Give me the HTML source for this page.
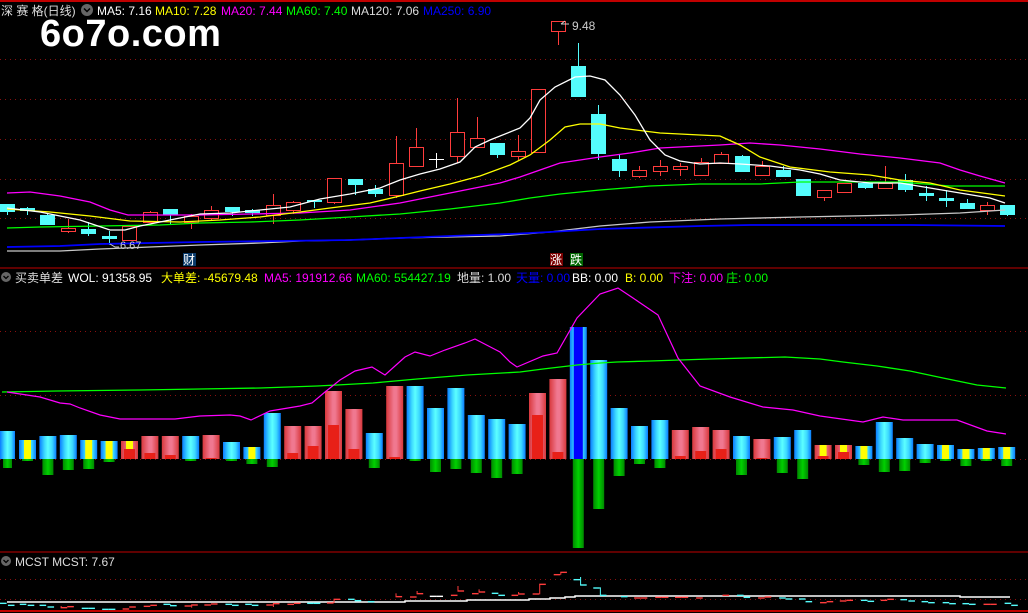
<!DOCTYPE html>
<html><head><meta charset="utf-8"><style>
html,body{margin:0;padding:0;background:#000;width:1028px;height:613px;overflow:hidden}
svg{display:block}
text{font-family:"Liberation Sans","Noto Sans CJK SC",sans-serif;font-size:12px}
</style></head><body>
<svg id="s" width="1028" height="613" xmlns="http://www.w3.org/2000/svg">
<defs>
<linearGradient id="gc" x1="0" x2="1"><stop offset="0" stop-color="#0a7cff"/><stop offset=".3" stop-color="#3cd8ff"/><stop offset=".5" stop-color="#5cffff"/><stop offset=".75" stop-color="#3cd8ff"/><stop offset="1" stop-color="#0a7cff"/></linearGradient>
<linearGradient id="gr" x1="0" x2="1"><stop offset="0" stop-color="#d8383c"/><stop offset=".45" stop-color="#f07890"/><stop offset=".6" stop-color="#f07890"/><stop offset="1" stop-color="#d8383c"/></linearGradient>
<linearGradient id="gg" x1="0" x2="1"><stop offset="0" stop-color="#008800"/><stop offset=".5" stop-color="#00d000"/><stop offset="1" stop-color="#008800"/></linearGradient>
</defs>
<rect width="1028" height="613" fill="#000"/>
<line x1="0" y1="1" x2="1028" y2="1" stroke="#c00000" stroke-width="2"/>
<line x1="0" y1="268" x2="1028" y2="268" stroke="#c00000"/>
<line x1="0" y1="552" x2="1028" y2="552" stroke="#c00000"/>
<line x1="0" y1="611" x2="1028" y2="611" stroke="#c00000" stroke-width="2"/>
<g stroke="#8a1010" stroke-dasharray="1 4">
<line x1="0" y1="59.5" x2="1028" y2="59.5"/><line x1="0" y1="99.5" x2="1028" y2="99.5"/><line x1="0" y1="139.5" x2="1028" y2="139.5"/><line x1="0" y1="179.5" x2="1028" y2="179.5"/><line x1="0" y1="218.5" x2="1028" y2="218.5"/>
<line x1="0" y1="331.5" x2="1028" y2="331.5"/><line x1="0" y1="395.5" x2="1028" y2="395.5"/><line x1="0" y1="459.5" x2="1028" y2="459.5"/>
<line x1="0" y1="579.5" x2="1028" y2="579.5"/><line x1="0" y1="599.5" x2="1028" y2="599.5"/>
</g>
<g id="main"></g>
<g id="vol"></g>
<g id="mc"></g>
<circle cx="87" cy="10" r="6" fill="#666"/><path d="M84 8.5l3 3 3-3" stroke="#000" fill="none" stroke-width="1.5"/>
<text x="1" y="15" fill="#ddd">深 赛 格(日线)</text>
<text x="97" y="15" fill="#fff">MA5: 7.16</text>
<text x="155" y="15" fill="#ffff00">MA10: 7.28</text>
<text x="221" y="15" fill="#ff00ff">MA20: 7.44</text>
<text x="286" y="15" fill="#00ff00">MA60: 7.40</text>
<text x="351" y="15" fill="#ddd">MA120: 7.06</text>
<text x="423" y="15" fill="#0000ff">MA250: 6.90</text>
<text x="40" y="46" fill="#fff" style="font-size:38px;font-weight:bold;letter-spacing:0.5px">6o7o.com</text>
<text x="572" y="30" fill="#ccc">9.48</text>
<path d="M561 24 l4 -3 M561 24h8" stroke="#ccc" fill="none"/>
<text x="120" y="249" fill="#ccc" style="font-size:11px">6.67</text>
<path d="M110 244 l5 3 h4" stroke="#ccc" fill="none"/>
<rect x="183" y="253" width="13" height="13" fill="#0a3a6a"/><text x="183" y="264" fill="#fff" style="font-size:12px">财</text>
<rect x="550" y="253" width="13" height="13" fill="#7a0000"/><text x="550" y="264" fill="#fff" style="font-size:12px">涨</text>
<rect x="570" y="253" width="13" height="13" fill="#006600"/><text x="570" y="264" fill="#fff" style="font-size:12px">跌</text>
<circle cx="6" cy="277" r="5" fill="#666"/><path d="M3.5 276l2.5 2.5 2.5-2.5" stroke="#000" fill="none" stroke-width="1.3"/>
<text x="15" y="282" fill="#ddd">买卖单差</text>
<text x="68" y="282" fill="#fff">WOL: 91358.95</text>
<text x="161" y="282" fill="#ffff00">大单差: -45679.48</text>
<text x="264" y="282" fill="#ff00ff">MA5: 191912.66</text>
<text x="356" y="282" fill="#00ff00">MA60: 554427.19</text>
<text x="457" y="282" fill="#ddd">地量: 1.00</text>
<text x="516" y="282" fill="#0000ff">天量: 0.00</text>
<text x="572" y="282" fill="#fff">BB: 0.00</text>
<text x="625" y="282" fill="#ffff00">B: 0.00</text>
<text x="669" y="282" fill="#ff00ff">下注: 0.00</text>
<text x="726" y="282" fill="#00ff00">庄: 0.00</text>
<circle cx="6" cy="561" r="5" fill="#666"/><path d="M3.5 560l2.5 2.5 2.5-2.5" stroke="#000" fill="none" stroke-width="1.3"/>
<text x="15" y="566" fill="#ddd">MCST  MCST: 7.67</text>
</svg>
<script>
var NS="http://www.w3.org/2000/svg";
function el(p,t,a){var e=document.createElementNS(NS,t);for(var k in a)e.setAttribute(k,a[k]);document.getElementById(p).appendChild(e);return e;}
function line(p,pts,c,w){el(p,"polyline",{points:pts.map(function(q){return q.join(",")}).join(" "),fill:"none",stroke:c,"stroke-width":w||1.3});}
var C=[[7,204,212,204,215,'c'],[27,208,211,207,215,'c'],[47,215,225,214,225,'c'],[68,228,231,219,233,'r'],[88,229,234,222,236,'c'],[109,236,239,231,245,'c'],[129,226,240,225,240,'r'],[150,212,222,211,222,'r'],[170,209,215,209,224,'c'],[191,216,222,214,229,'r'],[211,210,218,206,221,'r'],[232,207,212,207,216,'c'],[252,210,213,209,216,'c'],[273,205,215,194,224,'r'],[293,202,210,201,214,'r'],[314,200,201,200,208,'c'],[334,178,202,178,204,'r'],[355,179,185,179,195,'c'],[375,189,194,185,197,'c'],[396,163,195,136,198,'r'],[416,147,166,128,166,'r'],[436,159,160,153,168,'w'],[457,132,156,98,163,'r'],[477,138,147,117,147,'r'],[497,143,155,143,158,'c'],[518,151,156,135,160,'r'],[538,89,152,89,152,'r'],[558,21,31,21,45,'r'],[578,66,97,43,97,'c'],[598,114,154,105,160,'c'],[619,159,171,155,177,'c'],[639,170,176,166,178,'r'],[660,166,171,160,176,'r'],[680,166,169,163,176,'r'],[701,162,175,158,176,'r'],[721,154,163,152,163,'r'],[742,156,172,155,172,'c'],[762,166,175,161,176,'r'],[783,170,177,166,177,'c'],[803,179,196,179,196,'c'],[824,190,197,190,201,'r'],[844,183,192,183,192,'r'],[865,183,188,183,189,'c'],[885,183,188,166,188,'r'],[905,180,190,174,192,'c'],[926,193,196,186,201,'c'],[946,198,201,190,207,'c'],[967,203,209,199,209,'c'],[987,205,210,202,215,'r'],[1007,205,215,205,216,'c']];
C.forEach(function(k){var x=k[0],col=k[5]=='r'?'#ff3c3c':(k[5]=='c'?'#54fcfc':'#fff');
 el("main","line",{x1:x+.5,x2:x+.5,y1:k[3],y2:k[4],stroke:col});
 if(k[5]=='r')el("main","rect",{x:x-7+.5,y:k[1]+.5,width:14,height:Math.max(k[2]-k[1],1),fill:"#000",stroke:col});
 else if(k[5]=='w')el("main","line",{x1:x-7,x2:x+8,y1:k[1]+.5,y2:k[1]+.5,stroke:col});
 else el("main","rect",{x:x-7,y:k[1],width:15,height:Math.max(k[2]-k[1],2),fill:col});
});
line("main",[[7,251],[60,251],[100,249],[150,247],[200,245],[260,243],[300,241],[350,240],[400,238],[450,237],[500,236],[550,232],[600,226],[650,222],[720,219],[800,217],[900,215],[960,213],[1005,210]],"#c8c8c8");
line("main",[[7,247],[60,246],[100,244],[150,243],[200,242],[280,241],[350,240],[400,238],[450,236],[510,234],[550,232],[600,229],[700,226],[750,225],[850,225],[910,225],[1005,226]],"#0000ff",1.8);
line("main",[[7,228],[40,227],[100,226],[160,225],[200,223],[250,222],[300,220],[350,217],[400,214],[450,209],[500,203],[530,198],[560,194],[600,190],[650,186],[700,184],[760,184],[800,182],[850,182],[900,182],[950,186],[1005,186]],"#00ff00");
line("main",[[7,193],[30,192],[60,196],[90,202],[110,210],[128,215],[170,215],[200,215],[250,214],[300,213],[350,210],[400,203],[430,197],[470,189],[500,183],[520,177],[540,170],[560,163],[580,160],[600,157],[630,153],[660,148],[700,146],[720,145],[750,143],[780,145],[820,149],[860,154],[900,158],[940,163],[960,170],[980,176],[1005,183]],"#ff00ff");
line("main",[[7,209],[50,212],[90,216],[130,221],[180,222],[220,220],[260,217],[300,212],[330,208],[370,203],[400,196],[420,191],[450,184],[480,176],[510,165],[530,155],[550,140],[565,127],[580,124],[600,124],[620,128],[660,133],[700,135],[720,136],[740,145],[760,157],[790,167],[830,172],[870,175],[900,180],[930,183],[960,190],[990,194],[1005,196]],"#ffff00");
line("main",[[7,208],[40,212],[80,220],[110,230],[125,230],[140,226],[170,220],[200,214],[230,213],[260,210],[290,207],[320,199],[350,194],[380,188],[400,180],[420,174],[440,169],[460,162],[475,147],[490,140],[510,132],[520,128],[530,118],[540,100],[555,87],[575,77],[590,76],[605,80],[620,95],[635,115],[650,140],[665,155],[680,161],[700,164],[720,163],[740,164],[770,166],[800,170],[820,174],[840,180],[870,183],[900,183],[930,188],[960,193],[990,198],[1005,203]],"#ffffff");
var V=[[431,'c',468],[440,'y',461],[436,'c',475],[435,'c',470],[440,'y',469],[441,'y',462],[441,'ry',449],[436,'r',453],[436,'r',455],[436,'c',461],[435,'r',458],[442,'c',461],[447,'y',464],[413,'c',467],[426,'r',453],[426,'r',446],[391,'r',425],[409,'r',449],[433,'c',468],[386,'r',457],[386,'c',461],[408,'c',472],[388,'c',469],[415,'c',473],[419,'c',478],[424,'c',474],[393,'r',415],[379,'r',452],[327,'b',548],[360,'c',509],[408,'c',476],[426,'c',464],[420,'c',468],[430,'r',456],[427,'r',451],[430,'r',449],[436,'c',475],[439,'r',458],[437,'c',473],[430,'c',479],[445,'ry',456],[445,'ry',452],[446,'y',465],[422,'c',472],[438,'c',471],[444,'c',463],[445,'y',461],[449,'y',466],[448,'y',461],[447,'y',466]];
V.forEach(function(v,i){var x=i==0?0:19+20.4*(i-1),w=i==0?15:17,b=459,t=v[1];
 if(t[0]=='r'){el("vol","rect",{x:x,y:v[0],width:w,height:b-v[0],fill:"url(#gr)"});
  el("vol","rect",{x:x+3,y:v[2],width:w-6,height:b-v[2],fill:"#e82018"});
  if(t=='ry')el("vol","rect",{x:x+5,y:v[0],width:w-10,height:v[2]-v[0],fill:"#ffff00"});}
 else{el("vol","rect",{x:x,y:v[0],width:w,height:b-v[0],fill:"url(#gc)"});
  if(t=='y')el("vol","rect",{x:x+5,y:v[0],width:w-10,height:b-v[0],fill:"#ffff00"});
  if(t=='b')el("vol","rect",{x:x+4,y:v[0],width:w-8,height:b-v[0],fill:"#0000ff"});
  el("vol","rect",{x:x+3,y:b,width:w-6,height:v[2]-b,fill:"url(#gg)"});}
});
line("vol",[[2,392],[57,391],[140,390],[200,389],[260,388],[317,386],[337,385],[373,383],[417,379],[467,375],[520,372],[543,369],[577,365],[600,363],[617,362],[650,361],[710,359],[785,357],[820,359],[843,362],[877,366],[910,371],[943,378],[977,385],[1006,388]],"#00ff00");
line("vol",[[7,392],[40,397],[60,403],[70,404],[80,408],[100,415],[120,419],[175,419],[200,416],[230,415],[240,416],[251,420],[270,411],[300,406],[312,403],[325,392],[340,380],[355,371],[372,367],[385,375],[405,357],[415,352],[430,356],[445,350],[465,343],[475,339],[500,352],[510,362],[517,367],[543,356],[557,353],[577,318],[600,294],[618,288],[633,298],[658,315],[678,358],[700,386],[730,397],[763,407],[793,410],[820,416],[863,422],[883,417],[903,420],[957,420],[987,431],[1006,434]],"#ff00ff",1.2);
// MCST
line("mc",[[7,602],[405,602],[405,601],[467,601],[467,600],[529,600],[529,599],[550,599],[550,598],[565,598],[565,597],[575,597],[575,596],[960,596],[960,597],[1010,597]],"#ffffff",1.5);
var SX=1.517;
var D=[[0,175,'c'],[12,181,'c'],[30,178,'c'],[42,181,'c'],[60,181,'c'],[72,186,'c'],[92,188,'r',183],[102,185,'r'],[124,190,'c'],[134,190,'c'],[155,193,'c'],[165,193,'c'],[186,192,'r'],[196,186,'r'],[218,184,'r'],[228,181,'r'],[248,178,'c'],[258,182,'c',178],[280,183,'r'],[290,180,'r',188],[310,180,'r'],[320,177,'r'],[342,178,'c'],[352,181,'c'],[372,178,'c'],[382,181,'c'],[404,180,'r'],[414,176,'r',186],[436,178,'r'],[446,175,'r'],[466,175,'c'],[476,175,'c'],[496,174,'r'],[506,163,'r',174],[528,163,'c'],[538,167,'c'],[558,170,'c'],[600,155,'r',145],[622,156,'r'],[632,146,'r',138],[652,154,'w'],[662,154,'w'],[684,151,'r'],[694,138,'r',123],[716,146,'r'],[726,141,'r',133],[746,145,'c'],[756,151,'c'],[776,151,'r'],[786,147,'r',141],[808,147,'r'],[818,118,'r',148],[840,89,'r'],[850,82,'r',89],[870,104,'c'],[880,120,'c',96],[900,129,'c'],[910,151,'c',127],[942,155,'c'],[962,159,'r'],[972,159,'r'],[994,157,'r'],[1004,157,'r'],[1024,157,'r'],[1034,157,'r'],[1056,159,'r'],[1096,151,'r'],[1118,151,'c'],[1128,157,'c'],[1150,159,'r'],[1160,156,'r'],[1182,159,'c'],[1192,162,'c'],[1212,162,'c'],[1222,170,'c'],[1244,173,'r'],[1254,170,'r'],[1274,168,'r'],[1284,166,'r'],[1306,166,'c'],[1316,169,'c'],[1336,166,'r'],[1346,163,'r'],[1366,164,'c'],[1378,168,'c'],[1398,170,'c'],[1408,173,'c'],[1430,173,'c'],[1440,176,'c'],[1460,176,'c'],[1470,178,'c'],[1492,178,'r'],[1502,178,'r'],[1524,175,'c'],[1534,181,'c']];
D.forEach(function(d){var c=d[2]=='r'?'#ff3c3c':(d[2]=='c'?'#54fcfc':'#fff');var x=d[0]/SX,y=545+d[1]/3;
 el("mc","line",{x1:x,x2:x+6.6,y1:y,y2:y,stroke:c,'stroke-width':1.4});
 if(d[3])el("mc","line",{x1:x+.5,x2:x+.5,y1:545+d[3]/3,y2:y,stroke:c});});
</script>
</body></html>
